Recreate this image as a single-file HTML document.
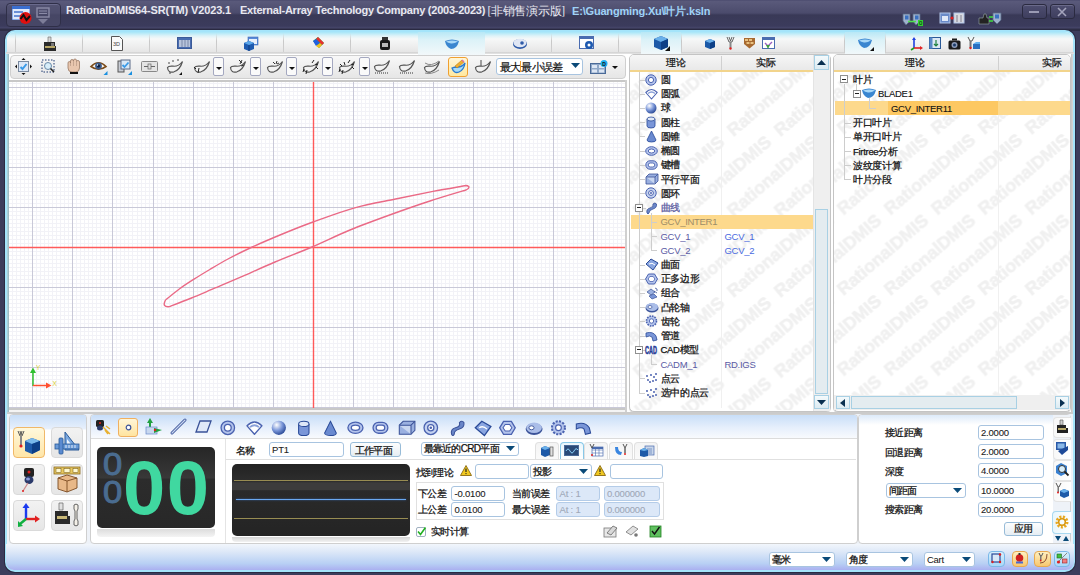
<!DOCTYPE html><html><head><meta charset="utf-8"><style>
*{margin:0;padding:0;box-sizing:border-box}
html,body{width:1080px;height:575px;overflow:hidden;background:#3c3d5c;font-family:"Liberation Sans",sans-serif;font-size:11px;color:#111}
.a{position:absolute}
svg{position:absolute;overflow:visible}
#title{left:0;top:0;width:1080px;height:31px;background:linear-gradient(#46466a 0,#5a5a7b 1px,#4b4b6c 13px,#393957 15px,#3b3b5c 26px,#46466a 28px,#2e2e46 29px,#2e2e46 31px)}
.tt{font-weight:bold;color:#e8e8f0;font-size:11px;top:4px;white-space:pre;letter-spacing:-0.1px}
.wb{top:4px;width:25px;height:15px;border:1px solid #2a2a40;border-radius:3px;background:linear-gradient(#4e4e70,#3e3e5e);box-shadow:inset 0 1px 0 #6a6a8a}
#frame{left:5px;top:30px;width:1070px;height:542px;border:2px solid #a4e4fa;border-radius:10px;background:#fff;box-shadow:0 0 0 1px #2a2a42}
.tabrow{background:linear-gradient(#a6e6f8 0,#dff3f8 4px,#f6f8f8 7px,#eeeeee 14px,#e2e2e2 22px)}
.tabsep{width:1px;background:linear-gradient(rgba(200,200,200,0),#c8c8c8 40%,#d0d0d0)}
.seltab{background:linear-gradient(#b8e8f6 0,#dcf2f8 8px,#f2f8fa 100%)}
.tb{background:linear-gradient(#f8f8f8,#e6e6e6);border:1px solid #cfcfcf;border-radius:4px}
.tr{font-size:9.5px;letter-spacing:-0.3px;white-space:pre;line-height:13px;-webkit-text-stroke:.25px currentColor}
.hd{white-space:pre;color:#111;-webkit-text-stroke:.25px currentColor}
.dd{width:10px;height:22px;border:1px solid #9a9a9a;border-radius:2px;background:#fafafa}
.dd:after{content:"";position:absolute;left:2px;top:9px;border-left:3px solid transparent;border-right:3px solid transparent;border-top:3px solid #111}
</style></head><body>
<div id="title" class="a"></div>
<div class="a" style="left:6px;top:3px;width:55px;height:24px;border-radius:4px;background:rgba(80,80,110,.6);border:1px solid #2f2f48;box-shadow:inset 0 1px 0 #6a6a8c"></div>
<svg style="left:11px;top:5px" width="22" height="20"><rect x="1" y="1" width="18" height="14" fill="#3a6fd0"/><rect x="1.5" y="4" width="17" height="10.5" fill="#dfe9fb"/><rect x="3" y="6" width="9" height="2" fill="#6a8fd8"/><rect x="3" y="10" width="7" height="2" fill="#6a8fd8"/><circle cx="14.5" cy="13" r="6" fill="#e01010"/><path d="M9.5 14 L12.5 10 L15.5 15 L19 11" stroke="#111" stroke-width="2" fill="none"/></svg>
<svg style="left:36px;top:7px" width="15" height="17"><rect x="1" y="1" width="12" height="9" fill="none" stroke="#8a8aa6" stroke-width="1.4"/><path d="M3 4h8M3 6.5h8" stroke="#8a8aa6" stroke-width="1.2"/><path d="M2 12 L12 12 L7 17Z" fill="#7d7d98"/></svg>
<div class="a tt" style="left:66px;letter-spacing:-0.15px">RationalDMIS64-SR(TM) V2023.1</div>
<div class="a tt" style="left:240px;letter-spacing:-0.24px">External-Array Technology Company (2003-2023)</div>
<div class="a tt" style="left:487.5px;font-family:Liberation Serif;font-weight:normal;font-size:11.5px;top:3.5px;letter-spacing:-0.3px">[非销售演示版]</div>
<div class="a tt" style="left:572px;letter-spacing:-0.18px;color:#9fd2f6">E:\Guangming.Xu\叶片.ksln</div>
<svg style="left:902px;top:13px" width="22" height="13"><path d="M1 1h7v7l-4 4 -3-4z" fill="#9fb2cc" stroke="#5a6a88" stroke-width=".8"/><path d="M11 1h7v7l-4 4-3-4z" fill="#9fb2cc" stroke="#5a6a88" stroke-width=".8"/><rect x="3" y="2.5" width="3.5" height="4" fill="#3a70c0"/><rect x="13" y="2.5" width="3.5" height="4" fill="#3a70c0"/><path d="M6 8.5h8" stroke="#50e050" stroke-width="1.6"/><rect x="16" y="7" width="5" height="6" fill="#30d030"/><text x="17" y="12.3" font-size="6" fill="#111" font-family="Liberation Sans">0</text></svg>
<svg style="left:939px;top:12px" width="26" height="13"><rect x="1" y="1" width="10" height="10" fill="#6a8ac8" stroke="#b0c4e8" stroke-width="1"/><rect x="3" y="4" width="6" height="5" fill="#e0e8f8"/><rect x="15" y="1" width="10" height="10" fill="#d8dae0" stroke="#b0c4e8" stroke-width="1"/><path d="M18 3v7M22 3v7" stroke="#808090"/><circle cx="13" cy="6" r="1.6" fill="#e02020"/></svg>
<svg style="left:977px;top:12px" width="26" height="14"><path d="M2 12 L2 6 L6 6 L7 2 L9 2 L10 6 L12 6 L12 12Z" fill="#232323" stroke="#9aa" stroke-width=".6"/><path d="M16 1h8v7l-4 4-4-4z" fill="#9fb2cc" stroke="#5a6a88" stroke-width=".8"/><rect x="18" y="2.5" width="4" height="4" fill="#3a70c0"/><path d="M12 5h4M12 9h4" stroke="#40e040" stroke-width="1.6"/></svg>
<div class="a wb" style="left:1022px"></div><div class="a" style="left:1029px;top:11px;width:10px;height:2px;background:#9a9ab4"></div>
<div class="a wb" style="left:1050px"></div><svg style="left:1057px;top:7px" width="10" height="10"><path d="M1 1L9 9M9 1L1 9" stroke="#a4a4bc" stroke-width="1.6"/></svg>
<div id="frame" class="a"></div>
<div class="a tabrow" style="left:7px;top:32px;width:1066px;height:21px;border-radius:8px 8px 0 0"></div>
<div class="a" style="left:7px;top:53px;width:2px;height:360px;background:linear-gradient(90deg,#b4d8e0,#98b4bc)"></div>
<div class="a" style="left:1071px;top:53px;width:2px;height:491px;background:linear-gradient(90deg,#c4c4c4,#d8d8d8)"></div>
<div class="a tabsep" style="left:15px;top:33px;height:20px"></div>
<div class="a tabsep" style="left:82px;top:33px;height:20px"></div>
<div class="a tabsep" style="left:149px;top:33px;height:20px"></div>
<div class="a tabsep" style="left:216px;top:33px;height:20px"></div>
<div class="a tabsep" style="left:283px;top:33px;height:20px"></div>
<div class="a tabsep" style="left:350px;top:33px;height:20px"></div>
<div class="a tabsep" style="left:484px;top:33px;height:20px"></div>
<div class="a tabsep" style="left:551px;top:33px;height:20px"></div>
<div class="a tabsep" style="left:618px;top:33px;height:20px"></div>
<div class="a" style="left:6px;top:52px;width:1068px;height:2px;background:linear-gradient(#d0d0d0,#e6e6e6)"></div>
<div class="a seltab" style="left:418px;top:32px;width:67px;height:23px"></div>
<svg style="left:42px;top:36px" width="16" height="16"><path d="M6 1h3v6h-3z" fill="#d8d8d8" stroke="#666" stroke-width=".6"/><path d="M2 6h11v4h1v5h-12z" fill="#2a2a2a"/><rect x="3" y="10" width="10" height="2" fill="#b8a868"/><rect x="9" y="7" width="3" height="3" fill="#777"/></svg>
<svg style="left:110px;top:36px" width="14" height="15"><path d="M1.5 .5h8l3 3v11h-11z" fill="#fafafa" stroke="#555"/><text x="3" y="10" font-size="5.5" fill="#444" font-family="Liberation Sans">3D</text></svg>
<svg style="left:177px;top:37px" width="16" height="13"><rect x=".5" y=".5" width="14" height="11" fill="#4a6cb0" stroke="#3a5a98"/><rect x="2" y="3" width="11" height="7" fill="#b8c4dc"/><path d="M5 3v7M8 3v7M11 3v7" stroke="#7a88a8"/></svg>
<svg style="left:243px;top:36px" width="16" height="15"><rect x="5" y="1" width="10" height="8" fill="#5a8ad8" stroke="#3a6ab8" stroke-width=".6"/><rect x="6" y="3" width="8" height="5" fill="#e8f0fc"/><path d="M1 7l5-2 5 2v6l-5 2-5-2z" fill="#1e5ab0"/><path d="M1 7l5 2 5-2-5-2z" fill="#5aa6ea"/><path d="M6 9v6" stroke="#0c3a80"/></svg>
<svg style="left:311px;top:36px" width="14" height="14"><path d="M2 5 L7 1 L13 7 L8 12 Z" fill="#30a040"/><path d="M7 1 L13 7 L11 9 L5 3z" fill="#e83030"/><path d="M2 5 L5 3 L9 7 L5 10z" fill="#2060e0"/><path d="M9 7l2 2-3 3-3-2z" fill="#f0c020"/></svg>
<svg style="left:379px;top:37px" width="12" height="13"><rect x="3" y="0" width="6" height="3" fill="#333"/><rect x="1" y="3" width="10" height="10" rx="2" fill="#1a1a1a"/><rect x="3" y="6" width="6" height="4" fill="#bbb"/></svg>
<svg style="left:444px;top:38px" width="16" height="12"><path d="M1 3 Q8 0 15 3 Q13 11 7 11 Q2 9 1 3z" fill="#3a86d0"/><path d="M2 3.5 Q8 1.5 14 3.5 Q10 6 7 5.5 Q4 5 2 3.5z" fill="#a8d8f8"/></svg>
<svg style="left:512px;top:37px" width="16" height="13"><ellipse cx="8" cy="7" rx="7" ry="5" fill="#2e5aa8"/><ellipse cx="8" cy="6" rx="6.5" ry="4.2" fill="#dfe6f4"/><circle cx="10" cy="6" r="1.8" fill="#2e5aa8"/></svg>
<svg style="left:579px;top:36px" width="16" height="15"><rect x=".5" y=".5" width="14" height="12" fill="#fff" stroke="#4a6cb0"/><rect x=".5" y=".5" width="14" height="2.5" fill="#4a6cb0"/><circle cx="10" cy="9" r="4" fill="#1e5ab0"/><circle cx="10" cy="9" r="1.5" fill="#fff"/></svg>
<div class="a tb" style="left:10px;top:55px;width:616px;height:24px"></div>
<div class="a dd" style="left:213px;top:57px;width:11px;height:19px;border-color:#a4a8c0"></div>
<div class="a dd" style="left:250px;top:57px;width:11px;height:19px;border-color:#a4a8c0"></div>
<div class="a dd" style="left:286px;top:57px;width:11px;height:19px;border-color:#a4a8c0"></div>
<div class="a dd" style="left:322px;top:57px;width:11px;height:19px;border-color:#a4a8c0"></div>
<div class="a dd" style="left:359px;top:57px;width:11px;height:19px;border-color:#a4a8c0"></div>
<svg style="left:15px;top:58px" width="17" height="17"><rect x="3.5" y="3.5" width="10" height="10" fill="#dce8f8" stroke="#7a8aa0"/><path d="M5.5 9l2 2 4-5" stroke="#3a9ae8" stroke-width="2" fill="none"/><path d="M8.5 0l-2 2h4zM8.5 17l-2-2h4zM0 8.5l2-2v4zM17 8.5l-2-2v4z" fill="#111"/></svg>
<svg style="left:41px;top:59px" width="16" height="16"><rect x="1" y="1" width="12" height="12" fill="none" stroke="#1e3a70" stroke-dasharray="1.5 1.5"/><circle cx="7" cy="7" r="3.5" fill="#d8eefa" stroke="#6a8aa8"/><path d="M9.5 9.5l3.5 3.5" stroke="#222" stroke-width="1.6"/></svg>
<svg style="left:66px;top:58px" width="16" height="17"><path d="M2 8 V5 Q2 3.5 3.5 3.5 Q4.5 3.5 4.5 5 V3 Q4.5 1.5 6 1.5 Q7.5 1.5 7.5 3 V2.5 Q7.5 1 9 1 Q10.5 1 10.5 2.5 V3.5 Q10.5 2.5 12 2.5 Q13.5 2.5 13.5 4 V10 Q13.5 14 9.5 14 H6 Q2 14 2 10z" fill="#e8c6ae" stroke="#9a7a64" stroke-width=".8"/><path d="M4.5 5v3M7.5 3v5M10.5 3.5v4.5" stroke="#b89884" stroke-width=".7"/><rect x="4" y="14" width="8" height="2" fill="#111"/></svg>
<svg style="left:90px;top:59px" width="18" height="16"><path d="M1 7.5 Q8.5 0 16 7.5 Q8.5 13 1 7.5z" fill="#f8f4ee" stroke="#7a4a18" stroke-width="1.6"/><circle cx="8.5" cy="7" r="3.4" fill="#3a5a8a"/><circle cx="8.5" cy="7" r="1.5" fill="#0a1a38"/><circle cx="7.5" cy="6" r=".7" fill="#fff"/><path d="M17.5 12v4h-4z" fill="#1a90e0"/></svg>
<svg style="left:116px;top:59px" width="17" height="16"><rect x="2" y="2" width="6" height="11" fill="#c8ccd4" stroke="#555"/><rect x="5" y="1" width="9" height="9" fill="#d8e8f8" stroke="#5a6a88"/><path d="M6.5 6l2 2 4-4.5" stroke="#3a9ae8" stroke-width="1.8" fill="none"/><path d="M16 12v4h-4z" fill="#1a90e0"/></svg>
<svg style="left:141px;top:61px" width="18" height="12"><rect x=".5" y=".5" width="16" height="10" rx="1" fill="#e4e4e4" stroke="#888"/><path d="M3 5.5h11" stroke="#666"/><rect x="7" y="3" width="3" height="5" fill="#ddd" stroke="#666" stroke-width=".7"/></svg>
<svg style="left:166px;top:59px" width="18" height="17"><path d="M1.5 8.5 Q2 14.5 8 12.8 Q14 10.8 16.5 2.5 Q12.5 7.8 7 7.2 Q2.5 6.8 1.5 8.5z" fill="#f2f2f2" stroke="#555" stroke-width="1.2"/><circle cx="3" cy="4" r=".8" fill="#333"/><circle cx="7" cy="2" r=".8" fill="#333"/><circle cx="12" cy="1" r=".8" fill="#333"/><circle cx="4" cy="14" r=".8" fill="#333"/><path d="M16 13v3h-3z" fill="#111"/></svg>
<svg style="left:193px;top:59px" width="18" height="17"><path d="M1.5 8.5 Q2 14.5 8 12.8 Q14 10.8 16.5 2.5 Q12.5 7.8 7 7.2 Q2.5 6.8 1.5 8.5z" fill="#f2f2f2" stroke="#555" stroke-width="1.2"/><path d="M1 8l2 2M6 9l-1 5" stroke="#222"/></svg>
<svg style="left:229px;top:59px" width="18" height="17"><path d="M1.5 8.5 Q2 14.5 8 12.8 Q14 10.8 16.5 2.5 Q12.5 7.8 7 7.2 Q2.5 6.8 1.5 8.5z" fill="#f2f2f2" stroke="#555" stroke-width="1.2"/><path d="M10 1l3 3M13 1l-2 4M15 6l-3 1" stroke="#333"/></svg>
<svg style="left:266px;top:59px" width="18" height="17"><path d="M1.5 8.5 Q2 14.5 8 12.8 Q14 10.8 16.5 2.5 Q12.5 7.8 7 7.2 Q2.5 6.8 1.5 8.5z" fill="#f2f2f2" stroke="#555" stroke-width="1.2"/><path d="M7 3l2 2M11 2l-1 3M13 4l-2 1" stroke="#333"/></svg>
<svg style="left:302px;top:59px" width="18" height="17"><path d="M1.5 8.5 Q2 14.5 8 12.8 Q14 10.8 16.5 2.5 Q12.5 7.8 7 7.2 Q2.5 6.8 1.5 8.5z" fill="#f2f2f2" stroke="#555" stroke-width="1.2"/><path d="M2 10l-1 3M5 11l-1 4M10 4l2-3M13 6l3-1M14 8l2 2" stroke="#222"/></svg>
<svg style="left:338px;top:59px" width="18" height="17"><path d="M1.5 8.5 Q2 14.5 8 12.8 Q14 10.8 16.5 2.5 Q12.5 7.8 7 7.2 Q2.5 6.8 1.5 8.5z" fill="#f2f2f2" stroke="#555" stroke-width="1.2"/><path d="M2 10l-1 3M5 11l-1 4M10 4l2-3M13 6l3-1M14 8l2 2M4 7l-2-2M7 6l-1-3" stroke="#222"/></svg>
<svg style="left:373px;top:58px" width="18" height="17"><path d="M1.5 8.5 Q2 14.5 8 12.8 Q14 10.8 16.5 2.5 Q12.5 7.8 7 7.2 Q2.5 6.8 1.5 8.5z" fill="#f2f2f2" stroke="#555" stroke-width="1.2"/><path d="M2 15h14" stroke="#333" stroke-dasharray="1 1"/></svg>
<svg style="left:398px;top:58px" width="18" height="17"><path d="M1.5 8.5 Q2 14.5 8 12.8 Q14 10.8 16.5 2.5 Q12.5 7.8 7 7.2 Q2.5 6.8 1.5 8.5z" fill="#f2f2f2" stroke="#555" stroke-width="1.2"/><path d="M2 15h14" stroke="#333" stroke-dasharray="1 1"/></svg>
<svg style="left:423px;top:59px" width="18" height="17"><path d="M1.5 8.5 Q2 14.5 8 12.8 Q14 10.8 16.5 2.5 Q12.5 7.8 7 7.2 Q2.5 6.8 1.5 8.5z" fill="#f2f2f2" stroke="#555" stroke-width="1.2"/><path d="M2 4 Q8 8 16 2M2 14 Q8 16 16 11" stroke="#888" fill="none"/></svg>
<div class="a" style="left:448px;top:57px;width:20px;height:20px;border:1px solid #f0a030;border-radius:3px;background:linear-gradient(#fff6d8,#ffe8a0)"></div>
<svg style="left:450px;top:59px" width="17" height="16"><path d="M2 9 Q4 15 9 13 Q14 11 15 4 Q12 8 8 8 Q4 8 2 9z" fill="#a8dcf8" stroke="#2a7ad0" stroke-width="1.3"/><path d="M5 7l7-6 2 2-7 6z" fill="#f0b030" stroke="#b07010" stroke-width=".5"/><path d="M12 1l2 2" stroke="#e070a0" stroke-width="1.5"/></svg>
<svg style="left:474px;top:59px" width="18" height="17"><path d="M1.5 8.5 Q2 14.5 8 12.8 Q14 10.8 16.5 2.5 Q12.5 7.8 7 7.2 Q2.5 6.8 1.5 8.5z" fill="#f2f2f2" stroke="#555" stroke-width="1.2"/><path d="M7 1v6" stroke="#666" stroke-width="1.2"/></svg>
<div class="a" style="left:496px;top:58px;width:87px;height:17px;border:1px solid #a8c4e0;border-radius:3px;background:#fff"></div>
<div class="a" style="left:500px;top:60px;font-size:11px;letter-spacing:-0.8px;white-space:pre;color:#111;-webkit-text-stroke:.2px #111">最大<span style="display:inline-block;width:1px;height:11px;background:#f0a030;vertical-align:-1px"></span>最小误差</div>
<svg style="left:571px;top:63px" width="10" height="6"><path d="M0 0h9l-4.5 5z" fill="#0a4a78"/></svg>
<svg style="left:590px;top:60px" width="18" height="14"><rect x=".5" y="3.5" width="15" height="10" fill="#90a8c8" stroke="#4a6a98"/><rect x="2" y="5" width="5" height="3" fill="#dce6f4"/><rect x="9" y="5" width="5" height="3" fill="#dce6f4"/><rect x="2" y="9.5" width="5" height="3" fill="#dce6f4"/><rect x="9" y="9.5" width="5" height="3" fill="#dce6f4"/><circle cx="14" cy="3.5" r="3.5" fill="#20b0f0"/><text x="12.2" y="5.6" font-size="5" font-weight="bold" fill="#111" font-family="Liberation Sans">D</text></svg>
<svg style="left:612px;top:66px" width="6" height="4"><path d="M0 0h6l-3 3z" fill="#111"/></svg>
<svg style="left:9px;top:80px" width="617" height="331"><rect x="0" y="0" width="617" height="331" fill="#fff"/><path d="M3.5 0V331M7.5 0V331M11.5 0V331M15.5 0V331M19.5 0V331M27.5 0V331M31.5 0V331M35.5 0V331M39.5 0V331M43.5 0V331M47.5 0V331M51.5 0V331M55.5 0V331M59.5 0V331M67.5 0V331M71.5 0V331M75.5 0V331M79.5 0V331M83.5 0V331M87.5 0V331M91.5 0V331M95.5 0V331M99.5 0V331M107.5 0V331M111.5 0V331M115.5 0V331M119.5 0V331M123.5 0V331M128.5 0V331M132.5 0V331M136.5 0V331M140.5 0V331M148.5 0V331M152.5 0V331M156.5 0V331M160.5 0V331M164.5 0V331M168.5 0V331M172.5 0V331M176.5 0V331M180.5 0V331M188.5 0V331M192.5 0V331M196.5 0V331M200.5 0V331M204.5 0V331M208.5 0V331M212.5 0V331M216.5 0V331M220.5 0V331M228.5 0V331M232.5 0V331M236.5 0V331M240.5 0V331M244.5 0V331M248.5 0V331M252.5 0V331M256.5 0V331M260.5 0V331M268.5 0V331M272.5 0V331M276.5 0V331M280.5 0V331M284.5 0V331M288.5 0V331M292.5 0V331M296.5 0V331M300.5 0V331M308.5 0V331M312.5 0V331M316.5 0V331M320.5 0V331M324.5 0V331M328.5 0V331M332.5 0V331M336.5 0V331M340.5 0V331M348.5 0V331M352.5 0V331M356.5 0V331M360.5 0V331M364.5 0V331M368.5 0V331M372.5 0V331M376.5 0V331M380.5 0V331M388.5 0V331M392.5 0V331M396.5 0V331M400.5 0V331M404.5 0V331M408.5 0V331M412.5 0V331M416.5 0V331M420.5 0V331M428.5 0V331M432.5 0V331M436.5 0V331M440.5 0V331M444.5 0V331M448.5 0V331M452.5 0V331M456.5 0V331M460.5 0V331M468.5 0V331M472.5 0V331M476.5 0V331M480.5 0V331M484.5 0V331M488.5 0V331M492.5 0V331M496.5 0V331M500.5 0V331M508.5 0V331M512.5 0V331M516.5 0V331M520.5 0V331M524.5 0V331M528.5 0V331M532.5 0V331M536.5 0V331M540.5 0V331M548.5 0V331M552.5 0V331M556.5 0V331M560.5 0V331M564.5 0V331M568.5 0V331M572.5 0V331M576.5 0V331M580.5 0V331M588.5 0V331M592.5 0V331M596.5 0V331M600.5 0V331M604.5 0V331M608.5 0V331M612.5 0V331M616.5 0V331M0 3.5H617M0 11.5H617M0 15.5H617M0 19.5H617M0 23.5H617M0 27.5H617M0 31.5H617M0 35.5H617M0 39.5H617M0 43.5H617M0 51.5H617M0 55.5H617M0 59.5H617M0 63.5H617M0 67.5H617M0 71.5H617M0 75.5H617M0 79.5H617M0 83.5H617M0 91.5H617M0 95.5H617M0 99.5H617M0 103.5H617M0 107.5H617M0 111.5H617M0 115.5H617M0 119.5H617M0 123.5H617M0 131.5H617M0 135.5H617M0 139.5H617M0 143.5H617M0 147.5H617M0 151.5H617M0 155.5H617M0 159.5H617M0 163.5H617M0 171.5H617M0 175.5H617M0 179.5H617M0 183.5H617M0 187.5H617M0 191.5H617M0 195.5H617M0 199.5H617M0 203.5H617M0 211.5H617M0 215.5H617M0 219.5H617M0 223.5H617M0 227.5H617M0 231.5H617M0 235.5H617M0 239.5H617M0 243.5H617M0 251.5H617M0 255.5H617M0 259.5H617M0 263.5H617M0 267.5H617M0 271.5H617M0 275.5H617M0 279.5H617M0 283.5H617M0 291.5H617M0 295.5H617M0 299.5H617M0 303.5H617M0 307.5H617M0 311.5H617M0 315.5H617M0 319.5H617M0 323.5H617" stroke="#f2f2f7" stroke-width="1"/><path d="M23.5 0V331M63.5 0V331M103.5 0V331M144.5 0V331M184.5 0V331M224.5 0V331M264.5 0V331M304.5 0V331M344.5 0V331M384.5 0V331M424.5 0V331M464.5 0V331M504.5 0V331M544.5 0V331M584.5 0V331M0 7.5H617M0 47.5H617M0 87.5H617M0 127.5H617M0 167.5H617M0 207.5H617M0 247.5H617M0 287.5H617M0 327.5H617" stroke="#c9c9d8" stroke-width="1"/><path d="M304.5 0V331 M0 167.5H617" stroke="#ff5a5a" stroke-width="1.4"/><path d="M156.5 220.0 C158.8 218.2 165.6 212.5 170.3 209.0 C175.1 205.5 179.9 202.4 185.0 199.2 C190.1 195.9 195.1 192.9 200.8 189.5 C206.5 186.1 211.9 182.8 219.0 179.0 C226.1 175.2 234.6 171.0 243.3 167.0 C252.0 163.0 260.9 159.2 271.0 155.0 C281.1 150.8 291.6 146.5 304.0 142.0 C316.4 137.5 331.9 131.6 345.7 127.8 C359.5 124.0 373.6 121.7 386.6 119.0 C399.7 116.3 412.3 113.7 424.0 111.4 C435.7 109.2 451.5 106.5 457.0 105.5 Q463.0 106.5 457.0 110.0 C451.0 111.8 433.3 117.0 421.0 121.0 C408.7 125.0 396.7 129.2 383.4 134.0 C370.1 138.8 354.4 144.5 341.0 150.0 C327.6 155.5 315.5 161.7 303.0 167.0 C290.5 172.3 278.0 176.9 266.0 182.0 C254.0 187.1 240.9 193.1 231.0 197.4 C221.1 201.7 214.9 204.3 206.8 207.7 C198.7 211.1 190.2 214.9 182.5 218.0 C174.8 221.1 164.2 225.2 160.6 226.6 Q152.5 227.5 156.5 220.0" fill="none" stroke="#ea6a86" stroke-width="1.4"/><path d="M24.0 306.0L24.0 290.0" stroke="#30c030" stroke-width="1.5" fill="none"/><path d="M21.0 293.0 L24.0 287.5 L27.0 293.0 Z" fill="#30c030"/><path d="M24.0 305.5L38.0 305.5" stroke="#ff5030" stroke-width="1.5" fill="none"/><path d="M37.0 302.5 L42.5 305.5 L37.0 308.5 Z" fill="#ff5030"/><text x="27.0" y="289.5" font-size="6.5" fill="#d8d030" font-family="Liberation Sans">Y</text><text x="43.5" y="306.0" font-size="6.5" fill="#d8d030" font-family="Liberation Sans">X</text></svg>
<div class="a" style="left:9px;top:79.5px;width:617px;height:2px;background:#c8c8c8"></div>
<div class="a" style="left:9px;top:407.5px;width:617px;height:2px;background:#c8c8c8"></div>
<div class="a" style="left:9px;top:409.5px;width:617px;height:2px;background:#f4f4f4"></div>
<div class="a" style="left:625px;top:80px;width:2px;height:332px;background:#d0d0d0"></div>
<div class="a seltab" style="left:641px;top:32px;width:40px;height:23px"></div>
<div class="a tabsep" style="left:681px;top:33px;height:20px"></div>
<svg style="left:653px;top:35px" width="18" height="17"><path d="M1 4l7-3 7 3v8l-7 3-7-3z" fill="#1c5aa8"/><path d="M1 4l7 3 7-3-7-3z" fill="#6ab0ea"/><path d="M8 7v8l7-3V4z" fill="#0d3f86"/><path d="M17 16v-5l-5 5z" fill="#111"/></svg>
<svg style="left:704px;top:38px" width="12" height="12"><path d="M1 3l5-2 5 2v6l-5 2-5-2z" fill="#1c5aa8"/><path d="M1 3l5 2 5-2-5-2z" fill="#6ab0ea"/><path d="M6 5v6l5-2V3z" fill="#0d3f86"/></svg>
<svg style="left:726px;top:37px" width="9" height="13"><path d="M1 0l2 5h3l2-5M3 0l1.5 4M6 0l-1.5 4" stroke="#555" fill="none" stroke-width=".9"/><rect x="3.5" y="5" width="2" height="6" fill="#888"/><circle cx="4.5" cy="11.5" r="1.2" fill="#e02020"/></svg>
<svg style="left:743px;top:37px" width="13" height="12"><path d="M1 1h11v6l-5.5 4.5L1 7z" fill="#a86a30"/><rect x="2" y="2" width="3" height="2" fill="#e8c080"/><rect x="6" y="2" width="3" height="2" fill="#e8c080"/><rect x="3.5" y="5" width="3" height="2" fill="#e8c080"/><rect x="7.5" y="5" width="3" height="2" fill="#e8c080"/></svg>
<svg style="left:762px;top:37px" width="13" height="13"><rect x=".5" y=".5" width="12" height="11" fill="#fff" stroke="#4a6cb0"/><rect x=".5" y=".5" width="12" height="2.5" fill="#4a6cb0"/><path d="M3 6l3 3 4-4" stroke="#9a60c0" stroke-width="1.4" fill="none"/><path d="M4 8l2 4 2-4" fill="#40a040"/></svg>
<div class="a" style="left:629px;top:54px;width:202px;height:358px;border:1px solid #c4c4c4;border-radius:5px;background:#fff;box-shadow:0 1px 0 #d8d8d8"></div>
<div class="a" style="left:630px;top:55px;width:183px;height:16px;border-radius:4px 0 0 0;background:linear-gradient(#f6f6f6,#e8e8e8)"></div>
<div class="a" style="left:630px;top:70px;width:183px;height:2px;background:#f2d48c"></div>
<div class="a" style="left:721px;top:56px;width:1px;height:14px;background:#d0d0d0"></div>
<svg style="left:630.0px;top:72.0px" width="183" height="338"><defs><pattern id="wm1" patternUnits="userSpaceOnUse" width="47" height="80.5" x="9.5" y="65.0"><g font-family="Liberation Sans" font-weight="bold" font-size="17.6" fill="#f0f0f0" stroke="#f0f0f0" stroke-width=".6"><text x="0" y="0" transform="translate(-141.0 -80.5) rotate(-40.6)">RationalDMIS</text><text x="0" y="0" transform="translate(-141.0 0.0) rotate(-40.6)">RationalDMIS</text><text x="0" y="0" transform="translate(-141.0 80.5) rotate(-40.6)">RationalDMIS</text><text x="0" y="0" transform="translate(-141.0 161.0) rotate(-40.6)">RationalDMIS</text><text x="0" y="0" transform="translate(-94.0 -80.5) rotate(-40.6)">RationalDMIS</text><text x="0" y="0" transform="translate(-94.0 0.0) rotate(-40.6)">RationalDMIS</text><text x="0" y="0" transform="translate(-94.0 80.5) rotate(-40.6)">RationalDMIS</text><text x="0" y="0" transform="translate(-94.0 161.0) rotate(-40.6)">RationalDMIS</text><text x="0" y="0" transform="translate(-47.0 -80.5) rotate(-40.6)">RationalDMIS</text><text x="0" y="0" transform="translate(-47.0 0.0) rotate(-40.6)">RationalDMIS</text><text x="0" y="0" transform="translate(-47.0 80.5) rotate(-40.6)">RationalDMIS</text><text x="0" y="0" transform="translate(-47.0 161.0) rotate(-40.6)">RationalDMIS</text><text x="0" y="0" transform="translate(0.0 -80.5) rotate(-40.6)">RationalDMIS</text><text x="0" y="0" transform="translate(0.0 0.0) rotate(-40.6)">RationalDMIS</text><text x="0" y="0" transform="translate(0.0 80.5) rotate(-40.6)">RationalDMIS</text><text x="0" y="0" transform="translate(0.0 161.0) rotate(-40.6)">RationalDMIS</text><text x="0" y="0" transform="translate(47.0 -80.5) rotate(-40.6)">RationalDMIS</text><text x="0" y="0" transform="translate(47.0 0.0) rotate(-40.6)">RationalDMIS</text><text x="0" y="0" transform="translate(47.0 80.5) rotate(-40.6)">RationalDMIS</text><text x="0" y="0" transform="translate(47.0 161.0) rotate(-40.6)">RationalDMIS</text><text x="0" y="0" transform="translate(94.0 -80.5) rotate(-40.6)">RationalDMIS</text><text x="0" y="0" transform="translate(94.0 0.0) rotate(-40.6)">RationalDMIS</text><text x="0" y="0" transform="translate(94.0 80.5) rotate(-40.6)">RationalDMIS</text><text x="0" y="0" transform="translate(94.0 161.0) rotate(-40.6)">RationalDMIS</text></g></pattern></defs><rect width="183" height="338" fill="url(#wm1)"/></svg>
<div class="a" style="left:721px;top:72px;width:1px;height:336px;background:#f0f0f0"></div>
<div class="a hd" style="left:666px;top:56px;font-size:10px">理论</div>
<div class="a hd" style="left:756px;top:56px;font-size:10px">实际</div>
<div class="a" style="left:813px;top:55px;width:17px;height:356px;background:#efefef;border-left:1px solid #e4e4e4"></div>
<div class="a" style="left:814px;top:55px;width:15px;height:15px;border:1px solid #a8d0e4;background:linear-gradient(#f4fafc,#dcebf2)"></div>
<svg style="left:817px;top:60px" width="9" height="5"><path d="M0 5h9L4.5 0z" fill="#0a3050"/></svg>
<div class="a" style="left:815px;top:209px;width:13px;height:185px;border:1px solid #a8d0e4;background:#e4ecf0"></div>
<div class="a" style="left:814px;top:395px;width:15px;height:14px;border:1px solid #a8d0e4;background:linear-gradient(#f4fafc,#dcebf2)"></div>
<svg style="left:817px;top:400px" width="9" height="5"><path d="M0 0h9L4.5 5z" fill="#0a3050"/></svg>
<div class="a" style="left:631px;top:214.60px;width:182px;height:14px;background:#fdd98c"></div>
<div class="a" style="left:638.5px;top:72px;width:0;height:320.6px;border-left:1px solid #cdcdcd"></div>
<div class="a" style="left:639.0px;top:79.5px;width:6.0px;height:0;border-top:1px solid #cdcdcd"></div>
<div class="a" style="left:645px;top:73.50px;line-height:0"><svg width="13" height="12"><circle cx="6" cy="6" r="5.2" fill="#b4c4ec" stroke="#4a62b0" stroke-width="1"/><circle cx="6" cy="6" r="2.6" fill="#fff" stroke="#4a62b0" stroke-width="1"/></svg></div>
<div class="a tr" style="left:660.5px;top:73.00px;color:#111">圆</div>
<div class="a" style="left:639.0px;top:93.7px;width:6.0px;height:0;border-top:1px solid #cdcdcd"></div>
<div class="a" style="left:645px;top:87.73px;line-height:0"><svg width="13" height="12"><path d="M.8 4.5 Q6.5 -1.5 12.2 4.5 L6.5 11z" fill="#fff" stroke="#4a62b0" stroke-width="1.1" stroke-linejoin="round"/><path d="M3 5.5 Q6.5 2.5 10 5.5" stroke="#8aa0d8" stroke-width="1.4" fill="none"/></svg></div>
<div class="a tr" style="left:660.5px;top:87.23px;color:#111">圆弧</div>
<div class="a" style="left:639.0px;top:108.0px;width:6.0px;height:0;border-top:1px solid #cdcdcd"></div>
<div class="a" style="left:645px;top:101.96px;line-height:0"><svg width="13" height="12"><defs><radialGradient id="sg" cx=".35" cy=".3" r=".8"><stop offset="0" stop-color="#fff"/><stop offset=".5" stop-color="#7a96d8"/><stop offset="1" stop-color="#1a3a88"/></radialGradient></defs><circle cx="6" cy="6" r="5.5" fill="url(#sg)"/></svg></div>
<div class="a tr" style="left:660.5px;top:101.46px;color:#111">球</div>
<div class="a" style="left:639.0px;top:122.2px;width:6.0px;height:0;border-top:1px solid #cdcdcd"></div>
<div class="a" style="left:645px;top:116.19px;line-height:0"><svg width="13" height="13"><path d="M2 3v7a4 2 0 0 0 8 0V3" fill="#7a96d8" stroke="#2a4a98" stroke-width=".8"/><ellipse cx="6" cy="3" rx="4" ry="2" fill="#dfe8f8" stroke="#2a4a98" stroke-width=".8"/></svg></div>
<div class="a tr" style="left:660.5px;top:115.69px;color:#111">圆柱</div>
<div class="a" style="left:639.0px;top:136.4px;width:6.0px;height:0;border-top:1px solid #cdcdcd"></div>
<div class="a" style="left:645px;top:130.42px;line-height:0"><svg width="13" height="13"><path d="M6.5 1 L11 10 A4.5 2 0 0 1 2 10z" fill="#6a8ad0" stroke="#2a4a98" stroke-width=".8"/></svg></div>
<div class="a tr" style="left:660.5px;top:129.92px;color:#111">圆锥</div>
<div class="a" style="left:639.0px;top:150.7px;width:6.0px;height:0;border-top:1px solid #cdcdcd"></div>
<div class="a" style="left:645px;top:144.65px;line-height:0"><svg width="13" height="12"><ellipse cx="6.5" cy="6" rx="5.8" ry="4.3" fill="#b4c4ec" stroke="#4a62b0" stroke-width="1"/><ellipse cx="6.5" cy="6" rx="3.2" ry="2" fill="#fff" stroke="#4a62b0" stroke-width="1"/></svg></div>
<div class="a tr" style="left:660.5px;top:144.15px;color:#111">椭圆</div>
<div class="a" style="left:639.0px;top:164.9px;width:6.0px;height:0;border-top:1px solid #cdcdcd"></div>
<div class="a" style="left:645px;top:158.88px;line-height:0"><svg width="13" height="12"><rect x=".8" y="1.8" width="11.4" height="8.4" rx="4.2" fill="#b4c4ec" stroke="#4a62b0" stroke-width="1"/><rect x="3.2" y="4" width="6.6" height="4" rx="2" fill="#fff" stroke="#4a62b0" stroke-width=".9"/></svg></div>
<div class="a tr" style="left:660.5px;top:158.38px;color:#111">键槽</div>
<div class="a" style="left:639.0px;top:179.1px;width:6.0px;height:0;border-top:1px solid #cdcdcd"></div>
<div class="a" style="left:645px;top:173.11px;line-height:0"><svg width="14" height="12"><path d="M1 4l3-3h9v7l-3 3H1z" fill="#9ab0e0" stroke="#3a5298" stroke-width=".8"/><path d="M1 4h9v7M10 4l3-3" stroke="#3a5298" stroke-width=".8" fill="#c8d6f0"/></svg></div>
<div class="a tr" style="left:660.5px;top:172.61px;color:#111">平行平面</div>
<div class="a" style="left:639.0px;top:193.3px;width:6.0px;height:0;border-top:1px solid #cdcdcd"></div>
<div class="a" style="left:645px;top:187.34px;line-height:0"><svg width="13" height="12"><circle cx="6" cy="6" r="5.2" fill="#c4d2f0" stroke="#4a62b0" stroke-width="1"/><circle cx="6" cy="6" r="2.4" fill="#fff" stroke="#4a62b0" stroke-width="1"/><circle cx="6" cy="6" r="1" fill="#4a62b0"/></svg></div>
<div class="a tr" style="left:660.5px;top:186.84px;color:#111">圆环</div>
<div class="a" style="left:634.5px;top:203.6px;width:8px;height:8px;border:1px solid #909090;background:#fff"></div><div class="a" style="left:636.5px;top:207.1px;width:4px;height:1px;background:#222"></div>
<div class="a" style="left:643.0px;top:207.6px;width:3.0px;height:0;border-top:1px solid #cdcdcd"></div>
<div class="a" style="left:645px;top:201.57px;line-height:0"><svg width="13" height="13"><path d="M2 11 Q1 7 5 6 Q9 5 8 2 Q10 0 11.5 2 Q12 6 8 7 Q4 8 4 11 Q3 13 2 11z" fill="#6a86c8" stroke="#3a5298" stroke-width=".8"/></svg></div>
<div class="a tr" style="left:660.5px;top:201.07px;color:#5a5aa0">曲线</div>
<div class="a tr" style="left:660.5px;top:215.30px;color:#9c8c68;-webkit-text-stroke:0">GCV_INTER1</div>
<div class="a" style="left:651.0px;top:221.8px;width:6.0px;height:0;border-top:1px solid #cdcdcd"></div>
<div class="a tr" style="left:660.5px;top:229.53px;color:#5a5aa4;-webkit-text-stroke:0">GCV_1</div>
<div class="a" style="left:651.0px;top:236.0px;width:6.0px;height:0;border-top:1px solid #cdcdcd"></div>
<div class="a tr" style="left:724.5px;top:229.53px;color:#4a6ae0;-webkit-text-stroke:0">GCV_1</div>
<div class="a tr" style="left:660.5px;top:243.76px;color:#5a5aa4;-webkit-text-stroke:0">GCV_2</div>
<div class="a" style="left:651.0px;top:250.3px;width:6.0px;height:0;border-top:1px solid #cdcdcd"></div>
<div class="a tr" style="left:724.5px;top:243.76px;color:#4a6ae0;-webkit-text-stroke:0">GCV_2</div>
<div class="a" style="left:639.0px;top:264.5px;width:6.0px;height:0;border-top:1px solid #cdcdcd"></div>
<div class="a" style="left:645px;top:258.49px;line-height:0"><svg width="14" height="13"><path d="M1 6 L6 1 L13 5 L8 12z" fill="#8aa6e0" stroke="#2a4a98" stroke-width="1"/><path d="M4 6 Q7 4 10 7" stroke="#fff" fill="none"/></svg></div>
<div class="a tr" style="left:660.5px;top:257.99px;color:#111">曲面</div>
<div class="a" style="left:639.0px;top:278.7px;width:6.0px;height:0;border-top:1px solid #cdcdcd"></div>
<div class="a" style="left:645px;top:272.72px;line-height:0"><svg width="13" height="12"><path d="M3.5 1h6l3 5-3 5h-6l-3-5z" fill="#b4c4ec" stroke="#4a62b0" stroke-width="1"/><path d="M4.8 3.5h3.4l1.7 2.5-1.7 2.5H4.8L3.1 6z" fill="#fff" stroke="#4a62b0" stroke-width=".8"/></svg></div>
<div class="a tr" style="left:660.5px;top:272.22px;color:#111">正多边形</div>
<div class="a" style="left:639.0px;top:293.0px;width:6.0px;height:0;border-top:1px solid #cdcdcd"></div>
<div class="a" style="left:645px;top:286.95px;line-height:0"><svg width="14" height="13"><path d="M2 5l4-3 4 3-4 3z" fill="#9ab0e0" stroke="#3a5298" stroke-width=".7"/><path d="M4 9l5-2 3 3-5 2z" fill="#7a96d8" stroke="#3a5298" stroke-width=".7"/><path d="M10 1l2 1M11 3l2 0M9 4l3 2" stroke="#3a5298" stroke-width=".8"/></svg></div>
<div class="a tr" style="left:660.5px;top:286.45px;color:#111">组合</div>
<div class="a" style="left:639.0px;top:307.2px;width:6.0px;height:0;border-top:1px solid #cdcdcd"></div>
<div class="a" style="left:645px;top:301.18px;line-height:0"><svg width="14" height="12"><ellipse cx="7" cy="7" rx="6.5" ry="4.5" fill="#3a5298"/><ellipse cx="7" cy="6" rx="6" ry="4" fill="#aabde8"/><ellipse cx="5" cy="6" rx="2" ry="1.5" fill="#fff" stroke="#3a5298" stroke-width=".7"/></svg></div>
<div class="a tr" style="left:660.5px;top:300.68px;color:#111">凸轮轴</div>
<div class="a" style="left:639.0px;top:321.4px;width:6.0px;height:0;border-top:1px solid #cdcdcd"></div>
<div class="a" style="left:645px;top:315.41px;line-height:0"><svg width="13" height="12"><circle cx="6.5" cy="6" r="5" fill="#b4c4ec" stroke="#4a62b0" stroke-width="1.6" stroke-dasharray="1.6 1"/><circle cx="6.5" cy="6" r="2.2" fill="#fff" stroke="#4a62b0" stroke-width=".9"/></svg></div>
<div class="a tr" style="left:660.5px;top:314.91px;color:#111">齿轮</div>
<div class="a" style="left:639.0px;top:335.6px;width:6.0px;height:0;border-top:1px solid #cdcdcd"></div>
<div class="a" style="left:645px;top:329.64px;line-height:0"><svg width="14" height="12"><path d="M1 3 Q8 1 11 6 L12 10 L8 11 L7 7 Q5 5 1 7z" fill="#7a96d8" stroke="#2a4a98" stroke-width=".8"/></svg></div>
<div class="a tr" style="left:660.5px;top:329.14px;color:#111">管道</div>
<div class="a" style="left:634.5px;top:345.9px;width:8px;height:8px;border:1px solid #909090;background:#fff"></div><div class="a" style="left:636.5px;top:349.4px;width:4px;height:1px;background:#222"></div>
<div class="a" style="left:643.0px;top:349.9px;width:3.0px;height:0;border-top:1px solid #cdcdcd"></div>
<div class="a" style="left:645px;top:343.87px;line-height:0"><svg width="14" height="12"><text x="0" y="10.5" font-size="11" font-weight="bold" fill="#2a3e98" stroke="#2a3e98" stroke-width=".6" font-family="Liberation Sans" transform="scale(.5 1)">CAD</text></svg></div>
<div class="a tr" style="left:660.5px;top:343.37px;color:#111">CAD模型</div>
<div class="a tr" style="left:660.5px;top:357.60px;color:#5a5aa4;-webkit-text-stroke:0">CADM_1</div>
<div class="a" style="left:651.0px;top:364.1px;width:6.0px;height:0;border-top:1px solid #cdcdcd"></div>
<div class="a tr" style="left:724.5px;top:357.60px;color:#5a5aa4;-webkit-text-stroke:0">RD.IGS</div>
<div class="a" style="left:639.0px;top:378.3px;width:6.0px;height:0;border-top:1px solid #cdcdcd"></div>
<div class="a" style="left:645px;top:372.33px;line-height:0"><svg width="13" height="12"><g fill="#3a52a8"><circle cx="3" cy="8" r=".9"/><circle cx="6" cy="3" r=".9"/><circle cx="9" cy="5" r=".9"/><circle cx="5" cy="10" r=".9"/><circle cx="8" cy="9" r=".9"/><circle cx="11" cy="2" r=".9"/><circle cx="2" cy="4" r=".9"/><circle cx="11" cy="8" r=".9"/></g></svg></div>
<div class="a tr" style="left:660.5px;top:371.83px;color:#111">点云</div>
<div class="a" style="left:639.0px;top:392.6px;width:6.0px;height:0;border-top:1px solid #cdcdcd"></div>
<div class="a" style="left:645px;top:386.56px;line-height:0"><svg width="13" height="12"><g fill="#3a52a8"><circle cx="3" cy="8" r=".9"/><circle cx="6" cy="3" r=".9"/><circle cx="9" cy="5" r=".9"/><circle cx="5" cy="10" r=".9"/><circle cx="8" cy="9" r=".9"/><circle cx="11" cy="2" r=".9"/><circle cx="2" cy="4" r=".9"/><circle cx="11" cy="8" r=".9"/></g></svg></div>
<div class="a tr" style="left:660.5px;top:386.06px;color:#111">选中的点云</div>
<div class="a" style="left:650.5px;top:212.6px;width:0;height:37.7px;border-left:1px solid #cdcdcd"></div>
<div class="a" style="left:650.5px;top:354.9px;width:0;height:9.2px;border-left:1px solid #cdcdcd"></div>
<div class="a tabsep" style="left:844px;top:33px;height:20px"></div>
<div class="a seltab" style="left:845px;top:32px;width:40px;height:23px"></div>
<div class="a tabsep" style="left:885px;top:33px;height:20px"></div>
<svg style="left:857px;top:37px" width="18" height="15"><path d="M1 3 Q8 0 15 3 Q13 11 7 11 Q2 9 1 3z" fill="#3a86d0"/><path d="M2 3.5 Q8 1.5 14 3.5 Q10 6 7 5.5 Q4 5 2 3.5z" fill="#a8d8f8"/><path d="M17 14v-4l-4 4z" fill="#111"/></svg>
<svg style="left:910px;top:37px" width="13" height="13"><path d="M4 11V2" stroke="#2040e0" stroke-width="1.6"/><path d="M2 3l2-3 2 3z" fill="#2040e0"/><path d="M4 11h7" stroke="#e02020" stroke-width="1.6"/><path d="M10 9l3 2-3 2z" fill="#e02020"/><path d="M4 11l-3 2" stroke="#20a020" stroke-width="1.6"/></svg>
<svg style="left:929px;top:37px" width="13" height="13"><rect x=".5" y=".5" width="11" height="11" fill="#dce8f4" stroke="#2a5a98"/><rect x=".5" y=".5" width="3" height="11" fill="#5a8ac8"/><path d="M7 3v6M5 7l2 2 2-2" stroke="#208040" stroke-width="1.2" fill="none"/></svg>
<svg style="left:948px;top:38px" width="13" height="12"><rect x=".5" y="2.5" width="12" height="9" rx="1.5" fill="#1a1a1a"/><rect x="4" y=".5" width="5" height="2" fill="#1a1a1a"/><circle cx="6.5" cy="7" r="3" fill="#8a9ab8"/><circle cx="6.5" cy="7" r="1.5" fill="#1a3a68"/></svg>
<svg style="left:967px;top:37px" width="14" height="13"><path d="M1 0l2 4h2l2-4" stroke="#555" fill="none"/><rect x="2.5" y="4" width="2" height="7" fill="#777"/><circle cx="3.5" cy="11" r="1.2" fill="#e02020"/><path d="M6 7h7v5H6z" fill="#2a70c0"/><path d="M6 7l3-2h4v2z" fill="#60b0f0"/></svg>
<div class="a" style="left:833px;top:54px;width:238px;height:358px;border:1px solid #c4c4c4;border-radius:5px;background:#fff;box-shadow:0 1px 0 #d8d8d8"></div>
<div class="a" style="left:834px;top:55px;width:236px;height:16px;border-radius:4px 4px 0 0;background:linear-gradient(#f6f6f6,#e8e8e8)"></div>
<div class="a" style="left:834px;top:70px;width:236px;height:2px;background:#f2d48c"></div>
<div class="a" style="left:998px;top:56px;width:1px;height:14px;background:#d0d0d0"></div>
<svg style="left:834.0px;top:72.0px" width="236" height="323"><defs><pattern id="wm2" patternUnits="userSpaceOnUse" width="47" height="80.5" x="9.5" y="63.0"><g font-family="Liberation Sans" font-weight="bold" font-size="17.6" fill="#f0f0f0" stroke="#f0f0f0" stroke-width=".6"><text x="0" y="0" transform="translate(-141.0 -80.5) rotate(-40.6)">RationalDMIS</text><text x="0" y="0" transform="translate(-141.0 0.0) rotate(-40.6)">RationalDMIS</text><text x="0" y="0" transform="translate(-141.0 80.5) rotate(-40.6)">RationalDMIS</text><text x="0" y="0" transform="translate(-141.0 161.0) rotate(-40.6)">RationalDMIS</text><text x="0" y="0" transform="translate(-94.0 -80.5) rotate(-40.6)">RationalDMIS</text><text x="0" y="0" transform="translate(-94.0 0.0) rotate(-40.6)">RationalDMIS</text><text x="0" y="0" transform="translate(-94.0 80.5) rotate(-40.6)">RationalDMIS</text><text x="0" y="0" transform="translate(-94.0 161.0) rotate(-40.6)">RationalDMIS</text><text x="0" y="0" transform="translate(-47.0 -80.5) rotate(-40.6)">RationalDMIS</text><text x="0" y="0" transform="translate(-47.0 0.0) rotate(-40.6)">RationalDMIS</text><text x="0" y="0" transform="translate(-47.0 80.5) rotate(-40.6)">RationalDMIS</text><text x="0" y="0" transform="translate(-47.0 161.0) rotate(-40.6)">RationalDMIS</text><text x="0" y="0" transform="translate(0.0 -80.5) rotate(-40.6)">RationalDMIS</text><text x="0" y="0" transform="translate(0.0 0.0) rotate(-40.6)">RationalDMIS</text><text x="0" y="0" transform="translate(0.0 80.5) rotate(-40.6)">RationalDMIS</text><text x="0" y="0" transform="translate(0.0 161.0) rotate(-40.6)">RationalDMIS</text><text x="0" y="0" transform="translate(47.0 -80.5) rotate(-40.6)">RationalDMIS</text><text x="0" y="0" transform="translate(47.0 0.0) rotate(-40.6)">RationalDMIS</text><text x="0" y="0" transform="translate(47.0 80.5) rotate(-40.6)">RationalDMIS</text><text x="0" y="0" transform="translate(47.0 161.0) rotate(-40.6)">RationalDMIS</text><text x="0" y="0" transform="translate(94.0 -80.5) rotate(-40.6)">RationalDMIS</text><text x="0" y="0" transform="translate(94.0 0.0) rotate(-40.6)">RationalDMIS</text><text x="0" y="0" transform="translate(94.0 80.5) rotate(-40.6)">RationalDMIS</text><text x="0" y="0" transform="translate(94.0 161.0) rotate(-40.6)">RationalDMIS</text></g></pattern></defs><rect width="236" height="323" fill="url(#wm2)"/></svg>
<div class="a" style="left:998px;top:72px;width:1px;height:323px;background:#f0f0f0"></div>
<div class="a hd" style="left:905px;top:56px;font-size:10px">理论</div>
<div class="a hd" style="left:1042px;top:56px;font-size:10px">实际</div>
<div class="a" style="left:835px;top:101.00px;width:235px;height:14px;background:#fdd98c"></div>
<div class="a" style="left:888px;top:101.00px;width:110px;height:14px;background:#fdc862"></div>
<div class="a" style="left:843.5px;top:84px;width:0;height:96px;border-left:1px solid #cdcdcd"></div>
<div class="a" style="left:843.5px;top:122.5px;width:7.5px;height:0;border-top:1px solid #cdcdcd"></div>
<div class="a" style="left:843.5px;top:136.7px;width:7.5px;height:0;border-top:1px solid #cdcdcd"></div>
<div class="a" style="left:843.5px;top:151.0px;width:7.5px;height:0;border-top:1px solid #cdcdcd"></div>
<div class="a" style="left:843.5px;top:165.2px;width:7.5px;height:0;border-top:1px solid #cdcdcd"></div>
<div class="a" style="left:843.5px;top:179.4px;width:7.5px;height:0;border-top:1px solid #cdcdcd"></div>
<div class="a" style="left:856px;top:84px;width:0;height:6px;border-left:1px solid #cdcdcd"></div>
<div class="a" style="left:868.5px;top:98px;width:0;height:10px;border-left:1px solid #cdcdcd"></div>
<div class="a" style="left:868.5px;top:108.0px;width:7.5px;height:0;border-top:1px solid #cdcdcd"></div>
<div class="a" style="left:840.0px;top:75.3px;width:8px;height:8px;border:1px solid #909090;background:#fff"></div><div class="a" style="left:842.0px;top:78.8px;width:4px;height:1px;background:#222"></div>
<div class="a" style="left:852.5px;top:89.8px;width:8px;height:8px;border:1px solid #909090;background:#fff"></div><div class="a" style="left:854.5px;top:93.3px;width:4px;height:1px;background:#222"></div>
<svg style="left:861px;top:87px" width="16" height="12"><path d="M1 3 Q8 0 15 3 Q13 11 7 11 Q2 9 1 3z" fill="#3a86d0"/><path d="M2 3.5 Q8 1.5 14 3.5 Q10 6 7 5.5 Q4 5 2 3.5z" fill="#a8d8f8"/></svg>
<div class="a tr" style="left:853.0px;top:72.80px;">叶片</div>
<div class="a tr" style="left:878.0px;top:87.30px;-webkit-text-stroke:.1px">BLADE1</div>
<div class="a tr" style="left:891.0px;top:101.50px;-webkit-text-stroke:.1px">GCV_INTER11</div>
<div class="a tr" style="left:853.0px;top:116.00px;">开口叶片</div>
<div class="a tr" style="left:853.0px;top:130.20px;">单开口叶片</div>
<div class="a tr" style="left:853.0px;top:144.50px;">Firtree分析</div>
<div class="a tr" style="left:853.0px;top:158.70px;">波纹度计算</div>
<div class="a tr" style="left:853.0px;top:172.90px;">叶片分段</div>
<div class="a" style="left:834px;top:395px;width:236px;height:15px;background:#efefef"></div>
<div class="a" style="left:836px;top:396px;width:14px;height:13px;border:1px solid #a8d0e4;background:linear-gradient(#f4fafc,#dcebf2)"></div>
<svg style="left:840px;top:399px" width="5" height="8"><path d="M5 0v8L0 4z" fill="#0a3050"/></svg>
<div class="a" style="left:851px;top:396px;width:166px;height:13px;border:1px solid #a8d0e4;background:#e4ecf0"></div>
<div class="a" style="left:1055px;top:396px;width:14px;height:13px;border:1px solid #a8d0e4;background:linear-gradient(#f4fafc,#dcebf2)"></div>
<svg style="left:1060px;top:399px" width="5" height="8"><path d="M0 0v8L5 4z" fill="#0a3050"/></svg>
<div class="a" style="left:7px;top:411.5px;width:1066px;height:2px;background:#cbcbcb"></div>
<div class="a" style="left:7px;top:413.5px;width:1066px;height:131px;background:#eef2f8"></div>
<div class="a" style="left:9.0px;top:414.0px;width:78.0px;height:130.0px;border:1px solid #cfcfcf;border-radius:4px;background:#fff"></div>
<div class="a" style="left:10.0px;top:415.0px;width:76.0px;height:15.0px;border-radius:3px 3px 0 0;background:linear-gradient(#c4dcf8,#e4eefc 60%,#f6f9fd)"></div>
<div class="a" style="left:10px;top:415px;width:76px;height:14px;border-radius:3px 3px 0 0;background:linear-gradient(#c8def8,#e8f0fc)"></div>
<div class="a" style="left:13.0px;top:427.0px;width:32px;height:31px;border:1px solid #f0b868;border-radius:4px;background:linear-gradient(#fff8dc,#ffe6a8)"></div>
<div class="a" style="left:50.5px;top:427.0px;width:32px;height:31px;border:1px solid #dadada;border-radius:4px;background:linear-gradient(#f2f2f2,#e6e6e6)"></div>
<div class="a" style="left:13.0px;top:463.5px;width:32px;height:31px;border:1px solid #dadada;border-radius:4px;background:linear-gradient(#f2f2f2,#e6e6e6)"></div>
<div class="a" style="left:50.5px;top:463.5px;width:32px;height:31px;border:1px solid #dadada;border-radius:4px;background:linear-gradient(#f2f2f2,#e6e6e6)"></div>
<div class="a" style="left:13.0px;top:500.0px;width:32px;height:31px;border:1px solid #dadada;border-radius:4px;background:linear-gradient(#f2f2f2,#e6e6e6)"></div>
<div class="a" style="left:50.5px;top:500.0px;width:32px;height:31px;border:1px solid #dadada;border-radius:4px;background:linear-gradient(#f2f2f2,#e6e6e6)"></div>
<svg style="left:16px;top:431px" width="26" height="24"><path d="M2 0l2 5h2l2-5M4 0l1 4M6 0l-1 4" stroke="#555" fill="none"/><rect x="4" y="5" width="2" height="9" fill="#888"/><circle cx="5" cy="15" r="1.6" fill="#e02020"/><path d="M9 10l7-3 8 3v9l-8 4-7-3z" fill="#1e5aa8"/><path d="M9 10l7 3 8-3-8-3z" fill="#7ab8ea"/><path d="M16 13v10l8-4v-9z" fill="#0e3f86"/></svg>
<svg style="left:53px;top:430px" width="28" height="26"><path d="M12 2 L12 20 L26 20z" fill="#7aa8e0" stroke="#2a5a98"/><path d="M14 9 L14 18 L21 18z" fill="#eef4fc"/><rect x="2" y="14" width="24" height="5" fill="#6a9ad8" stroke="#2a5a98" stroke-width=".8"/><rect x="6" y="8" width="4" height="16" rx="1" fill="#5a8ad0" stroke="#2a5a98" stroke-width=".8"/><path d="M13 15v3M16 15v3M19 15v3M22 15v3" stroke="#fff" stroke-width=".8"/></svg>
<svg style="left:19px;top:467px" width="20" height="25"><rect x="5" y="1" width="10" height="9" rx="2" fill="#222"/><circle cx="10" cy="5" r="1.5" fill="#e02020"/><ellipse cx="10" cy="13" rx="4.5" ry="4" fill="#2a3a6a"/><ellipse cx="9" cy="12" rx="2" ry="1.6" fill="#8a9ad8"/><path d="M9 16 L4 24" stroke="#cc8888" stroke-width="1.2"/><circle cx="4" cy="24" r="1" fill="#e02020"/></svg>
<svg style="left:53px;top:466px" width="28" height="27"><rect x="1" y="1" width="26" height="7" fill="#e8c860" stroke="#8a6a20" stroke-width=".8"/><rect x="3" y="2.5" width="5" height="4" fill="#fff8d0" stroke="#6a5010" stroke-width=".5"/><rect x="11" y="2.5" width="6" height="4" fill="#fff8d0" stroke="#6a5010" stroke-width=".5"/><rect x="20" y="2.5" width="5" height="4" fill="#fff8d0" stroke="#6a5010" stroke-width=".5"/><path d="M5 12l9-3 10 3v10l-10 4-9-3z" fill="#e8b888" stroke="#7a4a20" stroke-width=".9"/><path d="M5 12l9 3 10-3M14 15v11" stroke="#7a4a20" stroke-width=".9" fill="none"/></svg>
<svg style="left:16px;top:502px" width="26" height="26"><path d="M10 17V4" stroke="#1a3af0" stroke-width="2.4"/><path d="M6.5 6 L10 1 L13.5 6z" fill="#1a3af0"/><path d="M10 17H21" stroke="#e02020" stroke-width="2.4"/><path d="M19 13.5 L24 17 L19 20.5z" fill="#e02020"/><path d="M10 17L4 22" stroke="#10b040" stroke-width="2.4"/><path d="M2 19 L2 25 L7 24z" fill="#10b040"/></svg>
<svg style="left:53px;top:502px" width="28" height="27"><path d="M6 1h4v7h-4z" fill="#e0e0e0" stroke="#666" stroke-width=".7"/><path d="M2 9h13v5h2v8H2z" fill="#2a2a2a"/><rect x="4" y="14" width="10" height="3" fill="#c8b878"/><path d="M21 3a3 3 0 0 1 4 0v4l-1 2v8l1 2v4a3 3 0 0 1-4 0v-4l1-2V9l-1-2z" fill="#f4f0e8" stroke="#555" stroke-width=".9"/></svg>
<div class="a" style="left:89.5px;top:413.5px;width:768.0px;height:130.0px;border:1px solid #cfcfcf;border-radius:4px;background:#fff"></div>
<div class="a" style="left:90.5px;top:414.5px;width:766px;height:23.5px;border-radius:3px 3px 0 0;background:linear-gradient(#c8def8,#e6effc 55%,#f8fafd)"></div>
<div class="a" style="left:90.5px;top:438px;width:766px;height:1px;background:#dcdcdc"></div>
<div class="a" style="left:225px;top:439px;width:1px;height:104px;background:#e4e4e4"></div>
<div class="a" style="left:226px;top:459px;width:630px;height:1px;background:#e0e0e0"></div>
<div class="a" style="left:118px;top:417.5px;width:19.5px;height:19px;border:1px solid #f0b060;border-radius:3px;background:linear-gradient(#fff6d8,#ffe4a0)"></div>
<svg style="left:124.5px;top:424px" width="7" height="7"><circle cx="3.5" cy="3.5" r="2.3" fill="#fff" stroke="#3a5298" stroke-width="1.2"/></svg>
<svg style="left:94px;top:418px" width="18" height="18"><rect x="2" y="2" width="8" height="7" rx="1.5" fill="#222"/><circle cx="6" cy="5" r="1" fill="#e02020"/><ellipse cx="6" cy="10" rx="3" ry="2.5" fill="#2a3a6a"/><path d="M9 9 L16 16M12 8l4 3M11 12l3 4" stroke="#e8b030" stroke-width="1.4"/></svg>
<svg style="left:144px;top:418px" width="19" height="18"><path d="M6 14V3" stroke="#20a040" stroke-width="2"/><path d="M3 5 L6 0 L9 5z" fill="#20a040"/><rect x="2" y="9" width="11" height="7" fill="#c8d8f0" stroke="#6a8ac8" stroke-width=".7"/><path d="M10 10 L18 12 L10 15z" fill="#20a040"/><circle cx="11" cy="12" r="1.2" fill="#e02020"/></svg>
<div class="a" style="left:169.5px;top:418px;line-height:0"><svg width="17" height="17"><path d="M2 15 L15 2" stroke="#3a5298" stroke-width="3" stroke-linecap="round"/><path d="M2 15 L15 2" stroke="#c8d6f0" stroke-width="1.2" stroke-linecap="round"/></svg></div>
<div class="a" style="left:194.5px;top:418px;line-height:0"><svg width="17" height="17"><path d="M1 14 L5 3 L16 3 L12 14z" fill="#dfe8f8" stroke="#3a5298" stroke-width="1.3"/></svg></div>
<div class="a" style="left:220.0px;top:420px;line-height:0;transform:scale(1.3);transform-origin:0 0"><svg width="13" height="12"><circle cx="6" cy="6" r="5.2" fill="#b4c4ec" stroke="#4a62b0" stroke-width="1"/><circle cx="6" cy="6" r="2.6" fill="#fff" stroke="#4a62b0" stroke-width="1"/></svg></div>
<div class="a" style="left:246.0px;top:420px;line-height:0;transform:scale(1.3);transform-origin:0 0"><svg width="13" height="12"><path d="M.8 4.5 Q6.5 -1.5 12.2 4.5 L6.5 11z" fill="#fff" stroke="#4a62b0" stroke-width="1.1" stroke-linejoin="round"/><path d="M3 5.5 Q6.5 2.5 10 5.5" stroke="#8aa0d8" stroke-width="1.4" fill="none"/></svg></div>
<div class="a" style="left:271.0px;top:420px;line-height:0;transform:scale(1.3);transform-origin:0 0"><svg width="13" height="12"><defs><radialGradient id="sg" cx=".35" cy=".3" r=".8"><stop offset="0" stop-color="#fff"/><stop offset=".5" stop-color="#7a96d8"/><stop offset="1" stop-color="#1a3a88"/></radialGradient></defs><circle cx="6" cy="6" r="5.5" fill="url(#sg)"/></svg></div>
<div class="a" style="left:296.0px;top:420px;line-height:0;transform:scale(1.3);transform-origin:0 0"><svg width="13" height="13"><path d="M2 3v7a4 2 0 0 0 8 0V3" fill="#7a96d8" stroke="#2a4a98" stroke-width=".8"/><ellipse cx="6" cy="3" rx="4" ry="2" fill="#dfe8f8" stroke="#2a4a98" stroke-width=".8"/></svg></div>
<div class="a" style="left:322.0px;top:420px;line-height:0;transform:scale(1.3);transform-origin:0 0"><svg width="13" height="13"><path d="M6.5 1 L11 10 A4.5 2 0 0 1 2 10z" fill="#6a8ad0" stroke="#2a4a98" stroke-width=".8"/></svg></div>
<div class="a" style="left:347.0px;top:420px;line-height:0;transform:scale(1.3);transform-origin:0 0"><svg width="13" height="12"><ellipse cx="6.5" cy="6" rx="5.8" ry="4.3" fill="#b4c4ec" stroke="#4a62b0" stroke-width="1"/><ellipse cx="6.5" cy="6" rx="3.2" ry="2" fill="#fff" stroke="#4a62b0" stroke-width="1"/></svg></div>
<div class="a" style="left:372.0px;top:420px;line-height:0;transform:scale(1.3);transform-origin:0 0"><svg width="13" height="12"><rect x=".8" y="1.8" width="11.4" height="8.4" rx="4.2" fill="#b4c4ec" stroke="#4a62b0" stroke-width="1"/><rect x="3.2" y="4" width="6.6" height="4" rx="2" fill="#fff" stroke="#4a62b0" stroke-width=".9"/></svg></div>
<div class="a" style="left:398.0px;top:420px;line-height:0;transform:scale(1.3);transform-origin:0 0"><svg width="14" height="12"><path d="M1 4l3-3h9v7l-3 3H1z" fill="#9ab0e0" stroke="#3a5298" stroke-width=".8"/><path d="M1 4h9v7M10 4l3-3" stroke="#3a5298" stroke-width=".8" fill="#c8d6f0"/></svg></div>
<div class="a" style="left:423.0px;top:420px;line-height:0;transform:scale(1.3);transform-origin:0 0"><svg width="13" height="12"><circle cx="6" cy="6" r="5.2" fill="#c4d2f0" stroke="#4a62b0" stroke-width="1"/><circle cx="6" cy="6" r="2.4" fill="#fff" stroke="#4a62b0" stroke-width="1"/><circle cx="6" cy="6" r="1" fill="#4a62b0"/></svg></div>
<div class="a" style="left:449.0px;top:420px;line-height:0;transform:scale(1.3);transform-origin:0 0"><svg width="13" height="13"><path d="M2 11 Q1 7 5 6 Q9 5 8 2 Q10 0 11.5 2 Q12 6 8 7 Q4 8 4 11 Q3 13 2 11z" fill="#6a86c8" stroke="#3a5298" stroke-width=".8"/></svg></div>
<div class="a" style="left:474.0px;top:420px;line-height:0;transform:scale(1.3);transform-origin:0 0"><svg width="14" height="13"><path d="M1 6 L6 1 L13 5 L8 12z" fill="#8aa6e0" stroke="#2a4a98" stroke-width="1"/><path d="M4 6 Q7 4 10 7" stroke="#fff" fill="none"/></svg></div>
<div class="a" style="left:499.0px;top:420px;line-height:0;transform:scale(1.3);transform-origin:0 0"><svg width="13" height="12"><path d="M3.5 1h6l3 5-3 5h-6l-3-5z" fill="#b4c4ec" stroke="#4a62b0" stroke-width="1"/><path d="M4.8 3.5h3.4l1.7 2.5-1.7 2.5H4.8L3.1 6z" fill="#fff" stroke="#4a62b0" stroke-width=".8"/></svg></div>
<div class="a" style="left:525.0px;top:420px;line-height:0;transform:scale(1.3);transform-origin:0 0"><svg width="14" height="12"><ellipse cx="7" cy="7" rx="6.5" ry="4.5" fill="#3a5298"/><ellipse cx="7" cy="6" rx="6" ry="4" fill="#aabde8"/><ellipse cx="5" cy="6" rx="2" ry="1.5" fill="#fff" stroke="#3a5298" stroke-width=".7"/></svg></div>
<div class="a" style="left:550.0px;top:420px;line-height:0;transform:scale(1.3);transform-origin:0 0"><svg width="13" height="12"><circle cx="6.5" cy="6" r="5" fill="#b4c4ec" stroke="#4a62b0" stroke-width="1.6" stroke-dasharray="1.6 1"/><circle cx="6.5" cy="6" r="2.2" fill="#fff" stroke="#4a62b0" stroke-width=".9"/></svg></div>
<div class="a" style="left:575.0px;top:420px;line-height:0;transform:scale(1.3);transform-origin:0 0"><svg width="14" height="12"><path d="M1 3 Q8 1 11 6 L12 10 L8 11 L7 7 Q5 5 1 7z" fill="#7a96d8" stroke="#2a4a98" stroke-width=".8"/></svg></div>
<div class="a" style="left:97px;top:447px;width:117.5px;height:80.5px;border-radius:5px;background:linear-gradient(#262626 0,#383838 38%,#2c2c2c 40%,#282828 100%)"></div>
<div class="a" style="left:97px;top:529px;width:117.5px;height:8px;border-radius:0 0 4px 4px;background:linear-gradient(#dcdcdc,#f4f4f4)"></div>
<div class="a" style="left:103px;top:448px;font-size:32px;line-height:32px;font-weight:normal;color:#4a6c90;transform:scaleX(1.08);-webkit-text-stroke:1px #4a6c90;transform-origin:0 0">0</div>
<div class="a" style="left:103px;top:476px;font-size:32px;line-height:32px;font-weight:normal;color:#4a6c90;transform:scaleX(1.08);-webkit-text-stroke:1px #4a6c90;transform-origin:0 0">0</div>
<div class="a" style="left:123px;top:449.5px;font-size:76px;line-height:76px;font-weight:bold;color:#40d8a0;letter-spacing:1.5px">00</div>
<div class="a" style="left:232px;top:464px;width:178px;height:72px;border-radius:5px;background:linear-gradient(#222 0,#2e2e2e 25%,#3c3c3c 26%,#3c3c3c 36%,#2a2a2a 37%,#242424 100%)"></div>
<div class="a" style="left:232px;top:537px;width:178px;height:5px;border-radius:0 0 4px 4px;background:linear-gradient(#d4d4d4,#f2f2f2)"></div>
<div class="a" style="left:234px;top:480px;width:174px;height:1px;background:#978c52"></div>
<div class="a" style="left:234px;top:518px;width:174px;height:1px;background:#978c52"></div>
<div class="a" style="left:236px;top:499px;width:170px;height:1.4px;background:#6aa8f0;box-shadow:0 0 2px #3a70c0"></div>
<div class="a hd" style="left:236.0px;top:444.5px;font-size:10px;line-height:12px;letter-spacing:-0.6px">名称</div>
<div class="a" style="left:268.5px;top:441.5px;width:75.0px;height:15.0px;border:1px solid #a8c4e0;border-radius:3px;background:#fff"></div>
<div class="a hd" style="left:272.0px;top:443.6px;font-size:9.5px;line-height:12px;letter-spacing:-0.2px;color:#222;-webkit-text-stroke:.1px #222">PT1</div>
<div class="a" style="left:349.5px;top:442px;width:51px;height:15px;border:1px solid #98bcd8;border-radius:3px;background:linear-gradient(#fdfdfd,#e6eef4)"></div>
<div class="a hd" style="left:354.5px;top:444.5px;font-size:10px;line-height:12px;letter-spacing:-0.6px">工作平面</div>
<div class="a" style="left:420.5px;top:441.5px;width:98.5px;height:14.5px;border:1px solid #a8c4e0;border-radius:3px;background:#fff"></div>
<div class="a hd" style="left:423.5px;top:443.2px;font-size:10px;line-height:12px;letter-spacing:-0.7px">最靠近的CRD平面</div>
<svg style="left:506.0px;top:446.2px" width="9" height="5"><path d="M0 0h9L4.5 5z" fill="#0a4a78"/></svg>
<div class="a" style="left:535.0px;top:442px;width:24px;height:17px;border:1px solid #e0e0e0;border-bottom:none;border-radius:4px 4px 0 0;background:linear-gradient(#f4f4f4,#fafafa)"></div>
<div class="a" style="left:559.5px;top:442px;width:24px;height:17px;border:1px solid #88c8e8;border-bottom:none;border-radius:4px 4px 0 0;background:linear-gradient(#eaf6fc,#fff)"></div>
<div class="a" style="left:584.0px;top:442px;width:24px;height:17px;border:1px solid #e0e0e0;border-bottom:none;border-radius:4px 4px 0 0;background:linear-gradient(#f4f4f4,#fafafa)"></div>
<div class="a" style="left:609.0px;top:442px;width:24px;height:17px;border:1px solid #e0e0e0;border-bottom:none;border-radius:4px 4px 0 0;background:linear-gradient(#f4f4f4,#fafafa)"></div>
<div class="a" style="left:634.0px;top:442px;width:24px;height:17px;border:1px solid #e0e0e0;border-bottom:none;border-radius:4px 4px 0 0;background:linear-gradient(#f4f4f4,#fafafa)"></div>
<svg style="left:540px;top:445px" width="15" height="12"><path d="M1 3l4-2 5 2v7l-5 2-4-2z" fill="#1e5aa8"/><path d="M1 3l4 2 5-2-5-2z" fill="#6ab0ea"/><rect x="10" y="2" width="3" height="9" fill="#e0e0e0" stroke="#555" stroke-width=".7"/></svg>
<svg style="left:564px;top:445px" width="15" height="12"><rect x=".5" y=".5" width="14" height="10" fill="#2a4a78" stroke="#4a6a98"/><path d="M2 6 Q4 2 6 6 T10 6 T14 5" stroke="#8ad0f8" fill="none"/></svg>
<svg style="left:589px;top:444px" width="15" height="13"><rect x="3" y="3" width="11" height="9" fill="#fff" stroke="#4a6cb0" stroke-width=".7"/><path d="M3 6h11M3 9h11M6.5 3v9M10 3v9" stroke="#4a6cb0" stroke-width=".6"/><rect x="3" y="3" width="11" height="2" fill="#4a6cb0"/><path d="M1 0l2 4M5 0l-2 4" stroke="#555"/><circle cx="3" cy="11" r="1" fill="#e02020"/></svg>
<svg style="left:614px;top:444px" width="15" height="13"><path d="M1 3 Q1 11 7 11 L8 8 Q4 8 4 3z" fill="#3a86e0"/><path d="M9 0l2 4M13 0l-2 4" stroke="#555"/><rect x="10" y="4" width="2" height="5" fill="#888"/><circle cx="11" cy="10" r="1" fill="#e02020"/></svg>
<svg style="left:639px;top:445px" width="16" height="12"><rect x="6" y="1" width="9" height="9" fill="#c8d6ea" stroke="#4a6cb0" stroke-width=".7"/><path d="M8 4h5M8 6h5M8 8h5" stroke="#4a6cb0" stroke-width=".6"/><path d="M1 5l4-2 4 2v6l-4 1-4-1z" fill="#1e5aa8"/><path d="M1 5l4 1 4-1-4-2z" fill="#6ab0ea"/></svg>
<div class="a hd" style="left:415.5px;top:467.0px;font-size:10px;line-height:12px;letter-spacing:-0.6px">找到理论</div>
<svg style="left:460.0px;top:465.0px" width="12" height="11"><path d="M6 .5 L11.5 10.5 H.5z" fill="#f0c820" stroke="#8a6a10" stroke-width=".9"/><path d="M6 3.5v3.5" stroke="#222" stroke-width="1.2"/><circle cx="6" cy="8.6" r=".7" fill="#222"/></svg>
<div class="a" style="left:475.0px;top:464.0px;width:53.5px;height:15.0px;border:1px solid #a8c4e0;border-radius:3px;background:#fff"></div>
<div class="a" style="left:530.0px;top:464.0px;width:62.0px;height:15.0px;border:1px solid #a8c4e0;border-radius:3px;background:#fff"></div>
<div class="a hd" style="left:533.0px;top:466.0px;font-size:10px;line-height:12px;letter-spacing:-0.7px">投影</div>
<svg style="left:579.0px;top:469.0px" width="9" height="5"><path d="M0 0h9L4.5 5z" fill="#0a4a78"/></svg>
<svg style="left:594.0px;top:465.0px" width="12" height="11"><path d="M6 .5 L11.5 10.5 H.5z" fill="#f0c820" stroke="#8a6a10" stroke-width=".9"/><path d="M6 3.5v3.5" stroke="#222" stroke-width="1.2"/><circle cx="6" cy="8.6" r=".7" fill="#222"/></svg>
<div class="a" style="left:609.5px;top:464.0px;width:53.5px;height:15.0px;border:1px solid #a8c4e0;border-radius:3px;background:#fff"></div>
<div class="a" style="left:415.5px;top:482px;width:248.5px;height:38px;border:1px solid #e0e0e0"></div>
<div class="a hd" style="left:418.0px;top:487.8px;font-size:10px;line-height:12px;letter-spacing:-0.6px">下公差</div>
<div class="a hd" style="left:418.0px;top:504.1px;font-size:10px;line-height:12px;letter-spacing:-0.6px">上公差</div>
<div class="a" style="left:451.0px;top:485.7px;width:53.5px;height:15.3px;border:1px solid #a8c4e0;border-radius:3px;background:#fff"></div>
<div class="a hd" style="left:454.5px;top:487.9px;font-size:9.5px;line-height:12px;letter-spacing:-0.2px;color:#222;-webkit-text-stroke:.1px #222">-0.0100</div>
<div class="a" style="left:451.0px;top:502.3px;width:53.5px;height:15.0px;border:1px solid #a8c4e0;border-radius:3px;background:#fff"></div>
<div class="a hd" style="left:454.5px;top:504.4px;font-size:9.5px;line-height:12px;letter-spacing:-0.2px;color:#222;-webkit-text-stroke:.1px #222">0.0100</div>
<div class="a hd" style="left:512.0px;top:487.8px;font-size:10px;line-height:12px;letter-spacing:-0.6px">当前误差</div>
<div class="a hd" style="left:512.0px;top:504.1px;font-size:10px;line-height:12px;letter-spacing:-0.6px">最大误差</div>
<div class="a" style="left:556.0px;top:486.0px;width:44.0px;height:15.0px;border:1px solid #b4cce8;border-radius:3px;background:#dce8f8"></div>
<div class="a hd" style="left:559.5px;top:488.1px;font-size:9.5px;line-height:12px;letter-spacing:-0.2px;color:#a0a8b8;-webkit-text-stroke:.1px #a0a8b8">At : 1</div>
<div class="a" style="left:603.5px;top:486.0px;width:56.5px;height:15.0px;border:1px solid #b4cce8;border-radius:3px;background:#dce8f8"></div>
<div class="a hd" style="left:607.0px;top:488.1px;font-size:9.5px;line-height:12px;letter-spacing:-0.2px;color:#a0a8b8;-webkit-text-stroke:.1px #a0a8b8">0.000000</div>
<div class="a" style="left:556.0px;top:502.3px;width:44.0px;height:15.0px;border:1px solid #b4cce8;border-radius:3px;background:#dce8f8"></div>
<div class="a hd" style="left:559.5px;top:504.4px;font-size:9.5px;line-height:12px;letter-spacing:-0.2px;color:#a0a8b8;-webkit-text-stroke:.1px #a0a8b8">At : 1</div>
<div class="a" style="left:603.5px;top:502.3px;width:56.5px;height:15.0px;border:1px solid #b4cce8;border-radius:3px;background:#dce8f8"></div>
<div class="a hd" style="left:607.0px;top:504.4px;font-size:9.5px;line-height:12px;letter-spacing:-0.2px;color:#a0a8b8;-webkit-text-stroke:.1px #a0a8b8">0.000000</div>
<div class="a" style="left:415.5px;top:526.5px;width:10.5px;height:10.5px;border:1px solid #a0b0c0;border-radius:2px;background:#fff"></div>
<svg style="left:416px;top:526px" width="11" height="11"><path d="M2 5.5l2.5 3 5-7" stroke="#20b020" stroke-width="1.6" fill="none"/></svg>
<div class="a hd" style="left:431.0px;top:526.0px;font-size:10px;line-height:12px;letter-spacing:-0.6px">实时计算</div>
<svg style="left:603px;top:524px" width="15" height="14"><rect x="1" y="4" width="12" height="9" fill="#e8e8e8" stroke="#777" stroke-width=".8"/><path d="M4 9 L10 2 L14 4 L8 11z" fill="#d8d8d8" stroke="#666" stroke-width=".8"/></svg>
<svg style="left:625px;top:524px" width="15" height="14"><path d="M1 8 L8 2 L13 5 L6 11z" fill="#e0e0e0" stroke="#777" stroke-width=".8"/><circle cx="11" cy="11" r="1.8" fill="#777"/></svg>
<svg style="left:649px;top:524px" width="13" height="14"><rect x="1" y="2" width="11" height="11" fill="#60c060" stroke="#208020" stroke-width=".8"/><path d="M3 7l2.5 3 5-7" stroke="#111" stroke-width="1.4" fill="none"/></svg>
<div class="a" style="left:858.0px;top:413.5px;width:213.0px;height:130.0px;border:1px solid #cfcfcf;border-radius:4px;background:#fff"></div>
<div class="a" style="left:859px;top:414.5px;width:194px;height:10px;border-radius:3px 0 0 0;background:linear-gradient(#dceafa,#fff)"></div>
<div class="a" style="left:1053px;top:414.5px;width:17px;height:128px;background:#eef2f8"></div>
<div class="a" style="left:1053px;top:417px;width:18px;height:21px;border:1px solid #e4e4e4;border-right:none;border-radius:4px 0 0 4px;background:linear-gradient(90deg,#f8f8f8,#fff)"></div>
<div class="a" style="left:1053px;top:439px;width:18px;height:21px;border:1px solid #e4e4e4;border-right:none;border-radius:4px 0 0 4px;background:linear-gradient(90deg,#f8f8f8,#fff)"></div>
<div class="a" style="left:1053px;top:460px;width:18px;height:21px;border:1px solid #e4e4e4;border-right:none;border-radius:4px 0 0 4px;background:linear-gradient(90deg,#f8f8f8,#fff)"></div>
<div class="a" style="left:1053px;top:481px;width:18px;height:21px;border:1px solid #e4e4e4;border-right:none;border-radius:4px 0 0 4px;background:linear-gradient(90deg,#f8f8f8,#fff)"></div>
<div class="a" style="left:1052px;top:511px;width:19px;height:23px;border:1px solid #a8d8f0;border-right:none;border-radius:4px 0 0 4px;background:linear-gradient(90deg,#e8f6fc,#fff)"></div>
<svg style="left:1055px;top:419px" width="14" height="15"><path d="M5 1h3v5H5z" fill="#ccc" stroke="#555" stroke-width=".6"/><path d="M2 6h9v3h2v5H2z" fill="#222"/><rect x="3" y="9" width="8" height="2" fill="#b8a868"/></svg>
<svg style="left:1055px;top:441px" width="14" height="15"><rect x="1" y="1" width="10" height="8" fill="#2a5aa8"/><rect x="2.5" y="2.5" width="7" height="5" fill="#8ab8e8"/><path d="M3 10l4 4 6-5v-4z" fill="#1e4a98"/></svg>
<svg style="left:1055px;top:462px" width="14" height="15"><path d="M1 4l5-3 6 3v7l-6 3-5-3z" fill="#3a80d0"/><circle cx="7" cy="7" r="3.5" fill="#d8eefa" stroke="#333" stroke-width="1"/><path d="M9.5 9.5l4 4" stroke="#222" stroke-width="1.8"/></svg>
<svg style="left:1055px;top:483px" width="14" height="15"><path d="M1 0l2 4h1l2-4" stroke="#555" fill="none"/><rect x="2.5" y="4" width="1.5" height="5" fill="#777"/><circle cx="3" cy="9.5" r="1" fill="#e02020"/><path d="M5 8l4-2 5 2v5l-5 2-4-2z" fill="#1e5aa8"/><path d="M5 8l4 2 5-2-5-2z" fill="#6ab0ea"/></svg>
<svg style="left:1055px;top:515px" width="14" height="14"><circle cx="7" cy="7" r="5" fill="none" stroke="#e8a820" stroke-width="3" stroke-dasharray="2 1.4"/><circle cx="7" cy="7" r="3.3" fill="none" stroke="#d89810" stroke-width="1.6"/></svg>
<svg style="left:1055px;top:536px" width="15" height="6"><path d="M0 0h6L3 5z" fill="#0a4a78"/><path d="M8 5h6L11 0z" fill="#0a4a78"/></svg>
<div class="a hd" style="left:885.0px;top:426.5px;font-size:10px;line-height:12px;letter-spacing:-0.6px">接近距离</div>
<div class="a hd" style="left:885.0px;top:446.5px;font-size:10px;line-height:12px;letter-spacing:-0.6px">回退距离</div>
<div class="a hd" style="left:885.0px;top:465.5px;font-size:10px;line-height:12px;letter-spacing:-0.6px">深度</div>
<div class="a hd" style="left:885.0px;top:504.0px;font-size:10px;line-height:12px;letter-spacing:-0.6px">搜索距离</div>
<div class="a" style="left:885.5px;top:483.0px;width:80.0px;height:15.0px;border:1px solid #a8c4e0;border-radius:3px;background:#fff"></div>
<div class="a hd" style="left:888.5px;top:485.0px;font-size:10px;line-height:12px;letter-spacing:-0.7px">间距面</div>
<svg style="left:952.5px;top:488.0px" width="9" height="5"><path d="M0 0h9L4.5 5z" fill="#0a4a78"/></svg>
<div class="a" style="left:977.5px;top:424.5px;width:66.0px;height:15.0px;border:1px solid #a8c4e0;border-radius:3px;background:#fff"></div>
<div class="a hd" style="left:981.0px;top:426.6px;font-size:9.5px;line-height:12px;letter-spacing:-0.2px;color:#222;-webkit-text-stroke:.1px #222">2.0000</div>
<div class="a" style="left:977.5px;top:444.0px;width:66.0px;height:15.0px;border:1px solid #a8c4e0;border-radius:3px;background:#fff"></div>
<div class="a hd" style="left:981.0px;top:446.1px;font-size:9.5px;line-height:12px;letter-spacing:-0.2px;color:#222;-webkit-text-stroke:.1px #222">2.0000</div>
<div class="a" style="left:977.5px;top:463.0px;width:66.0px;height:15.0px;border:1px solid #a8c4e0;border-radius:3px;background:#fff"></div>
<div class="a hd" style="left:981.0px;top:465.1px;font-size:9.5px;line-height:12px;letter-spacing:-0.2px;color:#222;-webkit-text-stroke:.1px #222">4.0000</div>
<div class="a" style="left:977.5px;top:483.0px;width:66.0px;height:15.0px;border:1px solid #a8c4e0;border-radius:3px;background:#fff"></div>
<div class="a hd" style="left:981.0px;top:485.1px;font-size:9.5px;line-height:12px;letter-spacing:-0.2px;color:#222;-webkit-text-stroke:.1px #222">10.0000</div>
<div class="a" style="left:977.5px;top:502.0px;width:66.0px;height:15.0px;border:1px solid #a8c4e0;border-radius:3px;background:#fff"></div>
<div class="a hd" style="left:981.0px;top:504.1px;font-size:9.5px;line-height:12px;letter-spacing:-0.2px;color:#222;-webkit-text-stroke:.1px #222">20.0000</div>
<div class="a" style="left:1004px;top:521.5px;width:38.5px;height:14.5px;border:1px solid #98bcd8;border-radius:3px;background:linear-gradient(#fdfdfd,#e6eef4)"></div>
<div class="a hd" style="left:1013.5px;top:523.3px;font-size:10px;line-height:12px;letter-spacing:-0.6px">应用</div>
<div class="a" style="left:6px;top:544px;width:1068px;height:26px;border-radius:0 0 8px 8px;background:linear-gradient(#f2f6fc 0,#dde8f8 30%,#b8d0f4 75%,#aab0f0 100%)"></div>
<div class="a" style="left:769.0px;top:551.5px;width:66.0px;height:15.5px;border:1px solid #a8c4e0;border-radius:3px;background:#fff"></div>
<div class="a hd" style="left:772.0px;top:553.8px;font-size:10px;line-height:12px;letter-spacing:-0.7px">毫米</div>
<svg style="left:822.0px;top:556.8px" width="9" height="5"><path d="M0 0h9L4.5 5z" fill="#0a4a78"/></svg>
<div class="a" style="left:846.0px;top:551.5px;width:66.5px;height:15.5px;border:1px solid #a8c4e0;border-radius:3px;background:#fff"></div>
<div class="a hd" style="left:849.0px;top:553.8px;font-size:10px;line-height:12px;letter-spacing:-0.7px">角度</div>
<svg style="left:899.5px;top:556.8px" width="9" height="5"><path d="M0 0h9L4.5 5z" fill="#0a4a78"/></svg>
<div class="a" style="left:923.5px;top:551.5px;width:51.0px;height:15.5px;border:1px solid #a8c4e0;border-radius:3px;background:#fff"></div>
<div class="a hd" style="left:927.0px;top:554.2px;font-size:9.5px;line-height:12px;letter-spacing:-0.3px;-webkit-text-stroke:0">Cart</div>
<svg style="left:961.5px;top:556.8px" width="9" height="5"><path d="M0 0h9L4.5 5z" fill="#0a4a78"/></svg>
<div class="a" style="left:988.0px;top:550.5px;width:16.5px;height:16px;border:1px solid #7ab8e8;border-radius:4px;background:linear-gradient(#d8f0fc,#a8d8f8)"></div>
<div class="a" style="left:1011.5px;top:550.5px;width:16.5px;height:16px;border:1px solid #e8a850;border-radius:4px;background:linear-gradient(#fff0c0,#f8c870)"></div>
<div class="a" style="left:1034.0px;top:550.5px;width:16.5px;height:16px;border:1px solid #e8a850;border-radius:4px;background:linear-gradient(#fff0c0,#f8c870)"></div>
<div class="a" style="left:1053.5px;top:550.5px;width:16.5px;height:16px;border:1px solid #7ab8e8;border-radius:4px;background:linear-gradient(#d8f0fc,#a8d8f8)"></div>
<svg style="left:991px;top:553px" width="11" height="11"><rect x="1" y="1" width="8" height="8" fill="#d8e8f8" stroke="#2a4a98" stroke-width="1.2"/><circle cx="9" cy="1.5" r="1.2" fill="#e02020"/><circle cx="9" cy="9" r="1.2" fill="#e02020"/><circle cx="1.5" cy="9" r="1.2" fill="#e02020"/></svg>
<svg style="left:1014px;top:553px" width="11" height="11"><circle cx="5.5" cy="5" r="3.8" fill="#d02020"/><rect x="2" y="8.5" width="7" height="2" fill="#4a6ad0"/><rect x="4.5" y="0" width="2" height="2" fill="#333"/></svg>
<svg style="left:1037px;top:553px" width="11" height="11"><path d="M2 0l1.5 3h1L6 0" stroke="#555" fill="none"/><rect x="3" y="3" width="1.5" height="4" fill="#777"/><circle cx="3.7" cy="7.5" r=".9" fill="#e02020"/><path d="M10 1 Q10 10 3 10" stroke="#8a5030" fill="none"/></svg>
<svg style="left:1056px;top:553px" width="12" height="11"><rect x="1" y="1" width="4.5" height="4" fill="#40c040" stroke="#206020" stroke-width=".6"/><rect x="6.5" y="6" width="4.5" height="4" fill="#f08080" stroke="#a02020" stroke-width=".6"/><path d="M11 0L3 8" stroke="#888" stroke-width="1"/><circle cx="2.5" cy="9" r="1.6" fill="#e02020"/></svg>
</body></html>
